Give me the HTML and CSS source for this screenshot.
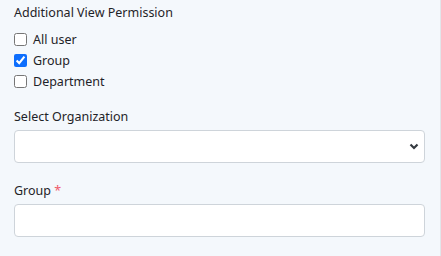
FILE: index.html
```html
<!DOCTYPE html>
<html lang="en">
<head>
    <meta charset="UTF-8">
    <title>View Permission</title>
    <link rel="stylesheet" href="styles.css">
</head>
<body>
    <div class="panel">
        <div class="field field-checks">
            <div class="label">Additional View Permission</div>
            <div class="checks">
                <label class="check"><input type="checkbox"> All user</label>
                <label class="check"><input type="checkbox" checked> Group</label>
                <label class="check"><input type="checkbox"> Department</label>
            </div>
        </div>
        <div class="field">
            <div class="label">Select Organization</div>
            <div class="select">
                <svg width="10" height="7" viewBox="0 0 10 7"><path d="M1.5 1.5 L5 5 L8.5 1.5" fill="none" stroke="#343a40" stroke-width="2.2"/></svg>
            </div>
        </div>
        <div class="field">
            <div class="label">Group <span class="req">*</span></div>
            <div class="input"></div>
        </div>
    </div>
</body>
</html>
```

FILE: styles.css
```css
body {
    margin: 0;
    font-family: "Noto Sans", sans-serif;
    font-size: 12.5px;
    color: #1f2328;
    background: #f4f8fc;
}
.panel {
    height: 256px;
    box-sizing: border-box;
    padding: 3px 15px 0 14px;
    border-right: 1px solid #e2e6ea;
}
.field {
    margin-bottom: 18px;
}
.field-checks {
    margin-bottom: 15px;
}
.label {
    line-height: 18px;
    padding-top: 1px;
    margin-bottom: 4px;
}
.req {
    color: #f05a6a;
}
.checks {
    display: flex;
    flex-direction: column;
    padding-top: 3px;
}
.check {
    display: flex;
    align-items: center;
    gap: 6px;
    line-height: 21px;
}
.check input {
    margin: 0;
    width: 13px;
    height: 13px;
    accent-color: #0d6efd;
}
.select,
.input {
    height: 33px;
    box-sizing: border-box;
    background: white;
    border: 1px solid #ced4da;
    border-radius: 4px;
}
.select {
    display: flex;
    align-items: center;
    justify-content: flex-end;
    padding-right: 5px;
}
```
